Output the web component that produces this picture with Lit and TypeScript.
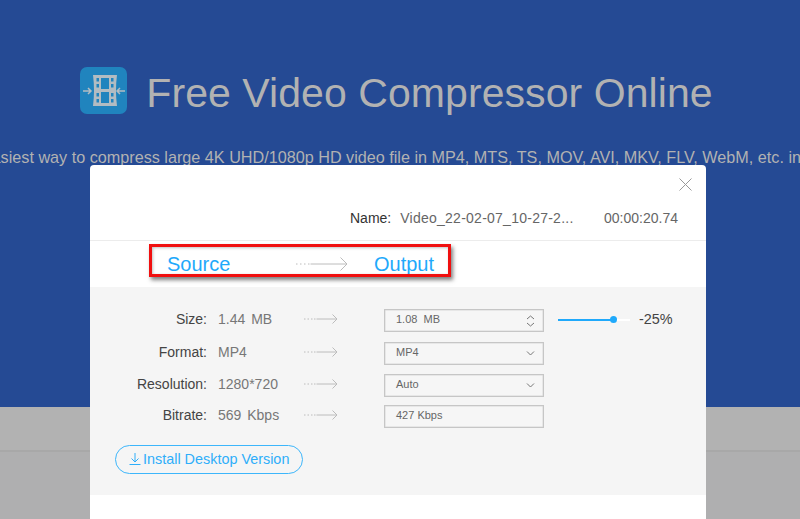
import { LitElement, html, css } from "lit";
import { customElement } from "lit/decorators.js";

const arrow = (w: number, h: number, dots: number[]) => {
  const m = h / 2;
  const dotPath = dots.map((x) => `M${x} ${m}h1.500`).join("");
  const start = dots[dots.length - 1] + 2.5;
  const hs = h / 2 - 0.5;
  return html`<svg class="arrow" width=${w} height=${h} viewBox="0 0 ${w} ${h}" fill="none" stroke="#bcbcbc" stroke-width="1">
    <path d=${dotPath} />
    <path d="M${start} ${m}H${w - 1}M${w - 1 - hs} ${m - hs}L${w - 1} ${m}L${w - 1 - hs} ${m + hs}" />
  </svg>`;
};

const chevron = html`<svg width="9" height="5" viewBox="0 0 9 5" fill="none" stroke="#777"><path d="M1 .500l3.500 3.500L8 .500"/></svg>`;

@customElement("app-root")
export class AppRoot extends LitElement {
  static styles = css`
    :host { display: block; width: 800px; height: 519px; position: relative; overflow: hidden; font-family: "Liberation Sans", Arial, sans-serif; background: #afafb0; }
    .hero { height: 407px; background: #254a94; display: flex; flex-direction: column; align-items: center; overflow: hidden; }
    .brand { display: flex; align-items: center; gap: 19px; margin: 67px 0 0 -7px; height: 47px; }
    .logo { width: 47px; height: 47px; display: block; flex: none; }
    h1 { margin: 4px 0 0; font-size: 41px; font-weight: 400; color: #b2b2b2; white-space: nowrap; line-height: 48px; letter-spacing: 0.07px; }
    .tag { margin: 33px 0 0 16px; font-size: 16.200px; line-height: 20px; color: #b2b2b2; white-space: nowrap; }
    .band { height: 43px; border-bottom: 2px solid #a8a8a8; background: #b2b2b2; }
    .modal { position: absolute; left: 90px; top: 165px; width: 616px; height: 354px; background: #fff; border-radius: 4px 4px 0 0; }
    .close { position: absolute; left: 589px; top: 13px; display: block; }
    .head { height: 76px; box-sizing: border-box; padding: 43px 28px 0 260px; display: flex; font-size: 14px; line-height: 20px; border-bottom: 1px solid #ececec; }
    .head .k { color: #333; margin-right: 9px; }
    .head .v { color: #666; flex: 1; letter-spacing: 0.25px; }
    .head .t { color: #666; }
    .titles { height: 46px; box-sizing: border-box; display: flex; align-items: center; padding: 0 0 0 77px; font-size: 20px; color: #1fa9fb; }
    .titles .src { width: 129px; }
    .titles .out { margin-left: 26px; }
    .panel { height: 208px; box-sizing: border-box; background: #f5f5f5; padding: 22px 0 0 25px; }
    .row { display: grid; grid-template-columns: 92px 97px 80px 160px 14px 72px auto; align-items: center; height: 23px; margin-bottom: 8.500px; font-size: 14px; }
    .row:first-child { margin-bottom: 10px; }
    .label { text-align: right; color: #444; padding-bottom: 3px; }
    .val { padding: 0 0 3px 11px; color: #777; word-spacing: 2px; }
    .box { height: 23px; box-sizing: border-box; border: 1px solid #c6c6c6; box-shadow: inset 0 0 0 0.500px #d8d8d8; background: #f6f6f6; padding: 0 8px 0 11px; display: flex; align-items: center; justify-content: space-between; font-size: 11px; color: #666; }
    .box span { padding-bottom: 3px; }
    .arrow { display: block; }
    .row .arrow { margin-bottom: 3px; }
    .slider { grid-column: 6; height: 2px; background: #fff; position: relative; margin-bottom: 1px; }
    .fill { width: 55px; height: 2px; background: #1fa9fb; }
    .knob { position: absolute; left: 52px; top: -3px; width: 7px; height: 7px; border-radius: 50%; background: #1fa9fb; }
    .pct { padding: 0 0 3px 9px; color: #444; font-size: 14.400px; }
    .install { display: inline-flex; align-items: center; gap: 2px; margin-top: 8px; height: 29px; width: 188px; box-sizing: border-box; padding-left: 13px; border: 1px solid #3db6fb; border-radius: 15px; color: #2eaefa; font-size: 14.400px; }
    .mark { position: absolute; left: 149px; top: 244px; width: 302px; height: 33px; box-sizing: border-box; border: 3px solid #f00f0f; box-shadow: 2px 3px 4px rgba(0,0,0,0.5), inset 1px 1px 3px rgba(0,0,0,0.25); }
  `;

  render() {
    const small = () => arrow(34, 10, [0, 3.5, 7, 10]);
    return html`
      <div class="hero">
        <div class="brand">
          <svg class="logo" viewBox="0 0 47 47">
            <rect width="47" height="47" rx="7" fill="#2084be" />
            <path fill="#b2bcc2" d="M13 8H37Q35 23.500 37 39H13Q15 23.500 13 8Z" />
            <g fill="#2084be">
              <rect x="21" y="11" width="8" height="11" />
              <rect x="21" y="25" width="8" height="11" />
              <rect x="16.500" y="11" width="2.500" height="3.500" /><rect x="16.500" y="17" width="2.500" height="3.500" />
              <rect x="16.500" y="26" width="2.500" height="3.500" /><rect x="16.500" y="32" width="2.500" height="3.500" />
              <rect x="31" y="11" width="2.500" height="3.500" /><rect x="31" y="17" width="2.500" height="3.500" />
              <rect x="31" y="26" width="2.500" height="3.500" /><rect x="31" y="32" width="2.500" height="3.500" />
            </g>
            <path fill="none" stroke="#b2bcc2" stroke-width="1.500" d="M3 24h8M8 21l3 3-3 3M45 24h-8M40 21l-3 3 3 3" />
          </svg>
          <h1>Free Video Compressor Online</h1>
        </div>
        <p class="tag">The easiest way to compress large 4K UHD/1080p HD video file in MP4, MTS, TS, MOV, AVI, MKV, FLV, WebM, etc. in seconds</p>
      </div>
      <div class="band"></div>
      <div class="modal">
        <svg class="close" width="13" height="13" viewBox="0 0 13 13" stroke="#999" fill="none"><path d="M.5.500l12 12M12.500.500l-12 12"/></svg>
        <div class="head"><span class="k">Name:</span><span class="v">Video_22-02-07_10-27-2...</span><span class="t">00:00:20.74</span></div>
        <div class="titles"><span class="src">Source</span>${arrow(52, 14, [0, 4, 8, 12])}<span class="out">Output</span></div>
        <div class="panel">
          <div class="row"><span class="label">Size:</span><span class="val">1.44 MB</span>${small()}
            <div class="box"><span>1.08&nbsp; MB</span>
              <svg width="9" height="12" viewBox="0 0 9 12" fill="none" stroke="#777"><path d="M1 4l3.500-3L8 4M1 8l3.500 3L8 8"/></svg></div>
            <div class="slider"><div class="fill"></div><div class="knob"></div></div><span class="pct">-25%</span></div>
          <div class="row"><span class="label">Format:</span><span class="val">MP4</span>${small()}
            <div class="box"><span>MP4</span>${chevron}</div></div>
          <div class="row"><span class="label">Resolution:</span><span class="val">1280*720</span>${small()}
            <div class="box"><span>Auto</span>${chevron}</div></div>
          <div class="row"><span class="label">Bitrate:</span><span class="val">569 Kbps</span>${small()}
            <div class="box"><span>427 Kbps</span></div></div>
          <div class="install">
            <svg width="12" height="12" viewBox="0 0 12 12" fill="none" stroke="#2eaefa"><path d="M6 0v9M2.500 5.500 6 9l3.500-3.500M.5 11.500h11"/></svg>
            <span>Install Desktop Version</span></div>
        </div>
      </div>
      <div class="mark"></div>
    `;
  }
}
